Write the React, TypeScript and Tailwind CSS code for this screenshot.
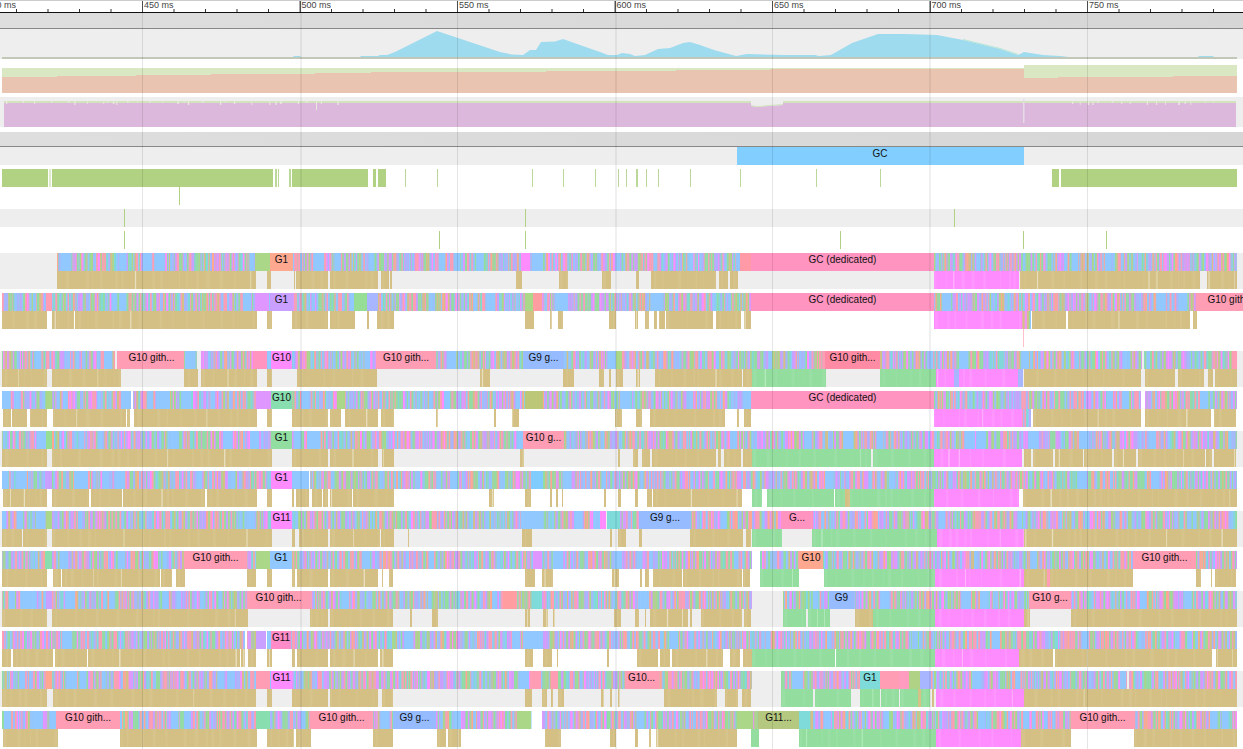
import React from "react";

// one slice of a track: [from, to, kind, label]
// kind m = mixed goroutines, t = tan syscalls, g = green, p = magenta, or a plain colour
type Seg = [number, number, string, string?];

type Proc = {
  top: Seg[];
  bot: Seg[];
  gray: boolean;
  mark?: number;
};

const WIDTH = 1243;
const PINK = "#ff9db4";
const GC = "#ff94c0";
const BLUE = "#90c8ff";
const MAG = "#ff8cff";
const LIME = "#aad888";
const MINT = "#88deae";
const SALMON = "#ffa890";
const PURPLE = "#c9a0ff";
const ORCHID = "#e096ff";
const PERI = "#a8b6ff";
const CYAN = "#7fdada";
const G9 = "#96bcff";

const procs: Proc[] = [
  {
    gray: true,
    top: [[57, 255, "m"], [255, 270, LIME], [270, 293, SALMON, "G1"], [293, 521, "m"], [521, 530, MAG], [530, 532, "m"], [532, 543, BLUE], [543, 740, "m"], [740, 751, "#ff9aa6"], [751, 934, GC, "GC (dedicated)"], [934, 1237, "m"]],
    bot: [[57, 256, "t"], [267, 271, "t"], [294, 295, "t"], [296, 328, "t"], [330, 378, "t"], [381, 389, "t"], [390, 392, "t"], [516, 522, "t"], [559, 568, "t"], [602, 611, "t"], [636, 639, "t"], [651, 716, "t"], [719, 728, "t"], [730, 738, "t"], [934, 1019, "p"], [1020, 1200, "t"], [1207, 1237, "t"]],
  },
  {
    gray: false,
    mark: 1023,
    top: [[2, 46, "m"], [46, 52, PINK], [52, 255, "m"], [255, 269, ORCHID], [269, 270, BLUE], [270, 293, PURPLE, "G1"], [293, 354, "m"], [354, 367, "#96de96"], [367, 378, PERI], [378, 525, "m"], [525, 533, LIME], [533, 542, "#ff9da0"], [542, 558, "m"], [558, 568, BLUE], [568, 751, "m"], [751, 934, GC, "GC (dedicated)"], [934, 1196, "m"], [1196, 1265, PINK, "G10 gith..."]],
    bot: [[2, 47, "t"], [52, 57, "t"], [57, 74, "t"], [75, 257, "t"], [267, 272, "t"], [292, 328, "t"], [330, 355, "t"], [367, 369, "t"], [377, 394, "t"], [525, 534, "t"], [550, 551.5, "t"], [558, 563, "t"], [609, 616, "t"], [635, 638, "t"], [645, 649, "t"], [654, 657, "t"], [659, 665, "t"], [666, 713, "t"], [716, 741, "t"], [744, 751, "t"], [934, 1022, "p"], [1022, 1031, "m"], [1032, 1066, "t"], [1068, 1190, "t"], [1193, 1197, "t"]],
  },
  {
    gray: true,
    top: [[2, 115, "m"], [117, 119, PINK], [119, 184, PINK, "G10 gith..."], [184, 197, "m"], [201, 253, "m"], [253, 267, "#ff94c0"], [267, 271, BLUE], [271, 292, MAG, "G10"], [292, 376, "m"], [376, 436, PINK, "G10 gith..."], [436, 523, "m"], [523, 564, G9, "G9 g..."], [564, 616, "m"], [616, 622, LIME], [622, 825, "m"], [825, 880, "#ff8ca4", "G10 gith..."], [880, 1142, "m"], [1144, 1232, "m"], [1232, 1237, PINK]],
    bot: [[2, 47, "t"], [52, 118, "t"], [118, 121, "t"], [184, 198, "t"], [201, 257, "t"], [267, 272, "t"], [297, 377, "t"], [480, 490, "t"], [563, 574, "t"], [599, 604, "t"], [609, 611, "t"], [616, 623, "t"], [636, 640, "t"], [655, 695, "t"], [695, 718, "t"], [718, 728, "t"], [728, 742, "t"], [743, 752, "t"], [752, 826, "g"], [880, 936, "g"], [936, 954, "p"], [954, 959, PERI], [959, 1018, "p"], [1018, 1023, PERI], [1024, 1141, "t"], [1145, 1175, "t"], [1178, 1204, "t"], [1208, 1213, "t"], [1215, 1237, "t"]],
  },
  {
    gray: false,
    top: [[2, 46, "m"], [46, 52, LIME], [52, 131, "m"], [133, 156, "m"], [156, 170, BLUE], [170, 256, "m"], [256, 271, ORCHID], [271, 292, MINT, "G10"], [292, 337, "m"], [337, 345, LIME], [345, 525, "m"], [525, 543, "#bcc878"], [543, 751, "m"], [751, 934, GC, "GC (dedicated)"], [934, 1141, "m"], [1145, 1237, "m"]],
    bot: [[3, 11, "t"], [12, 27, "t"], [30, 47, "t"], [53, 126, "t"], [127, 130, "t"], [134, 257, "t"], [267, 272, "t"], [292, 328, "t"], [330, 341, "t"], [345, 378, "t"], [381, 394, "t"], [436, 437.5, "t"], [494, 496, "t"], [512, 519, "t"], [615, 622, "t"], [636, 642, "t"], [650, 725, "t"], [737, 739, "t"], [744, 751, "t"], [934, 1022, "p"], [1022, 1031, "m"], [1033, 1141, "t"], [1145, 1211, "t"], [1214, 1236, "t"]],
  },
  {
    gray: true,
    top: [[2, 46, "m"], [46, 52, "#96de96"], [52, 271, "m"], [271, 292, "#92dea0", "G1"], [292, 307, "m"], [307, 319, BLUE], [319, 523, "m"], [523, 564, PINK, "G10 g..."], [564, 1237, "m"]],
    bot: [[2, 47, "t"], [52, 272, "t"], [292, 328, "t"], [330, 378, "t"], [382, 394, "t"], [520, 524, "t"], [618, 620, "t"], [633, 638, "t"], [642, 650, "t"], [652, 716, "t"], [718, 721, "t"], [724, 741, "t"], [743, 752, "t"], [752, 871, "g"], [873, 934, "g"], [934, 1022, "p"], [1024, 1031, "t"], [1033, 1053, "t"], [1055, 1083, "t"], [1084, 1112, "t"], [1114, 1136, "t"], [1138, 1205, "t"], [1206, 1212, "t"], [1214, 1236, "t"]],
  },
  {
    gray: false,
    top: [[2, 45, "m"], [45, 52, PURPLE], [52, 74, "m"], [74, 88, BLUE], [88, 271, "m"], [271, 292, MAG, "G1"], [292, 309, BLUE], [310, 531, "m"], [531, 543, "#80ccff"], [543, 1237, "m"]],
    bot: [[3, 47, "t"], [52, 89, "t"], [91, 122, "t"], [123, 205, "t"], [207, 257, "t"], [267, 272, "t"], [292, 294, "t"], [296, 309, "t"], [312, 322, "t"], [323, 328, "t"], [330, 352, "t"], [353, 394, "t"], [489, 494, "t"], [525, 531, "t"], [550, 552, "t"], [556, 558, "t"], [562, 563, "t"], [604, 606, "t"], [618, 621, "t"], [635, 638, "t"], [647, 652, "t"], [653, 742, "t"], [752, 762, "g"], [767, 834, "g"], [835, 845, "g"], [845, 850, "t"], [850, 934, "g"], [934, 1019, "p"], [1023, 1237, "t"]],
  },
  {
    gray: true,
    top: [[2, 46, "m"], [46, 52, LIME], [52, 271, "m"], [271, 292, MAG, "G11"], [292, 521, "m"], [521, 543, BLUE], [543, 600, "m"], [600, 606, MAG], [607, 620, CYAN], [620, 639, "m"], [639, 691, G9, "G9 g..."], [691, 781, "m"], [781, 813, GC, "G..."], [813, 1237, "m"]],
    bot: [[2, 22, "t"], [23, 47, "t"], [52, 272, "t"], [292, 295, "t"], [299, 328, "t"], [330, 380, "t"], [381, 394, "t"], [408, 409, "t"], [522, 532, "t"], [610, 612, "t"], [618, 626, "t"], [639, 642, "t"], [690, 743, "t"], [746, 751, "t"], [752, 782, "g"], [812, 937, "g"], [937, 1024, "p"], [1024, 1237, "t"]],
  },
  {
    gray: false,
    top: [[2, 45, "m"], [45, 52, MINT], [52, 184, "m"], [184, 247, PINK, "G10 gith..."], [247, 256, "m"], [256, 270, LIME], [270, 292, BLUE, "G1"], [292, 533, "m"], [533, 542, ORCHID], [542, 752, "m"], [760, 799, "m"], [799, 823, SALMON, "G10"], [823, 1133, "m"], [1133, 1196, PINK, "G10 gith..."], [1196, 1237, "m"]],
    bot: [[2, 47, "t"], [53, 61, "t"], [62, 160, "t"], [161, 172, "t"], [176, 185, "t"], [247, 256, "t"], [267, 272, "t"], [292, 295, "t"], [297, 328, "t"], [330, 378, "t"], [382, 383, "t"], [389, 393, "t"], [525, 535, "t"], [542, 553, "t"], [612, 619, "t"], [640, 642, "t"], [645, 649, "t"], [653, 682, "t"], [683, 742, "t"], [743, 750, "t"], [760, 799, "g"], [824, 935, "g"], [935, 1024, "p"], [1024, 1047, "t"], [1047, 1050, PINK], [1050, 1133, "t"], [1196, 1201, "t"], [1211, 1212, "t"], [1215, 1236, "t"]],
  },
  {
    gray: true,
    top: [[2, 46, "m"], [46, 52, PURPLE], [52, 247, "m"], [247, 310, PINK, "G10 gith..."], [310, 503, "m"], [503, 516, "#ff9da0"], [516, 532, "m"], [532, 542, CYAN], [542, 752, "m"], [783, 829, "m"], [829, 854, G9, "G9"], [854, 1029, "m"], [1029, 1071, PINK, "G10 g..."], [1071, 1237, "m"]],
    bot: [[2, 47, "t"], [52, 248, "t"], [310, 328, "t"], [330, 393, "t"], [410, 412, "t"], [432, 438, "t"], [525, 530, "t"], [543, 548, "t"], [553, 555, "t"], [614, 621, "t"], [635, 639, "t"], [645, 646, "t"], [650, 688, "t"], [690, 692, "t"], [701, 742, "t"], [744, 751, "t"], [783, 806, "g"], [808, 830, "g"], [855, 873, "t"], [873, 935, "g"], [935, 1024, "p"], [1024, 1030, "t"], [1071, 1237, "t"]],
  },
  {
    gray: false,
    top: [[2, 245, "m"], [247, 256, "m"], [256, 266, PURPLE], [267, 271, BLUE], [271, 291, "#ff8cc8", "G11"], [291, 527, "m"], [527, 543, BLUE], [543, 1237, "m"]],
    bot: [[2, 11, "t"], [13, 53, "t"], [55, 87, "t"], [88, 240, "t"], [241, 245, "t"], [248, 256, "t"], [267, 272, "t"], [292, 295, "t"], [297, 328, "t"], [330, 378, "t"], [380, 393, "t"], [525, 533, "t"], [543, 552, "t"], [557, 558, "t"], [607, 609, "t"], [637, 658, "t"], [660, 670, "t"], [672, 723, "t"], [730, 740, "t"], [743, 752, "t"], [752, 835, "g"], [836, 935, "g"], [935, 1019, "p"], [1019, 1053, "t"], [1055, 1212, "t"], [1216, 1237, "t"]],
  },
  {
    gray: true,
    top: [[2, 46, "m"], [46, 52, SALMON], [52, 256, "m"], [256, 270, PINK], [270, 271, BLUE], [271, 292, MAG, "G11"], [292, 530, "m"], [530, 541, PINK], [541, 551, "m"], [551, 558, PINK], [558, 625, "m"], [625, 658, PINK, "G10..."], [658, 752, "m"], [781, 860, "m"], [860, 880, CYAN, "G1"], [880, 899, PINK], [899, 909, "#ff9cc0"], [909, 920, "#b0d284"], [920, 931, PERI], [931, 1127, "m"], [1129, 1237, "m"]],
    bot: [[2, 47, "t"], [53, 256, "t"], [267, 272, "t"], [292, 328, "t"], [330, 378, "t"], [382, 393, "t"], [525, 532, "t"], [542, 547, "t"], [551, 553, "t"], [558, 564, "t"], [601, 604, "t"], [610, 612, "t"], [618, 619.5, "t"], [664, 717, "t"], [725, 738, "t"], [742, 751, "t"], [781, 813, "g"], [815, 851, "g"], [860, 880, "g"], [881, 899, "g"], [900, 918, "g"], [918, 921, "t"], [921, 930, "g"], [932, 934, "t"], [936, 1024, "p"], [1024, 1237, "t"]],
  },
  {
    gray: false,
    top: [[2, 56, "m"], [56, 120, PINK, "G10 gith..."], [120, 256, "m"], [256, 270, MINT], [270, 310, "m"], [310, 373, PINK, "G10 gith..."], [373, 393, "m"], [393, 436, G9, "G9 g..."], [436, 517, "m"], [517, 531, LIME], [531, 532, "#c8e6ff"], [542, 737, "m"], [737, 753, LIME], [753, 758, "m"], [758, 799, "#b5c880", "G11..."], [799, 810, CYAN], [810, 1071, "m"], [1071, 1134, PINK, "G10 gith..."], [1134, 1237, "m"]],
    bot: [[3, 58, "t"], [120, 257, "t"], [267, 294, "t"], [296, 311, "t"], [373, 393, "t"], [437, 446, "t"], [448, 461, "t"], [545, 561, "t"], [610, 616, "t"], [635, 638, "t"], [649, 651, "t"], [656, 737, "t"], [751, 759, "g"], [799, 825, "g"], [825, 936, "g"], [936, 1021, "p"], [1021, 1071, "t"], [1134, 1237, "t"]],
  },
];

const gcBars: Seg[] = [[2, 48, "l"], [49.5, 50.5, "l"], [52, 273, "l"], [275, 277, "l"], [278, 279, "l"], [289, 291, "l"], [292, 295, "l"], [295, 368, "l"], [373, 376, "l"], [378, 386, "l"], [405, 406, "l"], [437, 438, "l"], [532, 533, "l"], [563, 564, "l"], [595, 596, "l"], [618, 619, "l"], [626, 627, "l"], [636, 638, "l"], [646, 647, "l"], [658, 659, "l"], [690, 691, "l"], [740, 741, "l"], [816, 817, "l"], [880, 881, "l"], [1052, 1059, "l"], [1061, 1237, "l"]];

const areaPoints = [
  [2, 57], [293, 57], [294, 56], [300, 56], [301, 57], [360, 57], [361, 56], [378, 56], [380, 55], [387, 55], [395, 52], [437, 31], [470, 42], [500, 52], [512, 54.5], [523, 55], [530, 50], [536, 50], [541, 42], [555, 41.5], [563, 39], [580, 45], [600, 52], [608, 55], [617, 55], [622, 53], [630, 54], [635, 56], [645, 55], [658, 49], [670, 48], [683, 43], [690, 42], [700, 45], [714, 50], [736, 56], [747, 54], [783, 55], [815, 55], [819, 56], [831, 55], [852, 43], [878, 34], [904, 34], [937, 35], [963, 40], [1000, 49], [1018, 55], [1024, 52], [1043, 55], [1060, 56], [1069, 57], [1198, 57], [1199, 56], [1213, 56], [1214, 57], [1237, 57],
];

// small seeded generator so every render draws the same stripes
function makeRand(seed: number) {
  let a = seed;
  return () => {
    a = (a + 0x6d2b79f5) | 0;
    let t = Math.imul(a ^ (a >>> 15), 1 | a);
    t = (t + Math.imul(t ^ (t >>> 7), 61 | t)) ^ t;
    return ((t ^ (t >>> 14)) >>> 0) / 4294967296;
  };
}

const mixColors = [BLUE, BLUE, BLUE, PINK, PINK, PINK, ORCHID, ORCHID, PURPLE, MAG, "#92dea0", "#92dea0", "#92dea0", LIME, SALMON, CYAN, PERI, PERI, "#d4c084"];

function Stripes({ seg, y, h, rand }: { seg: Seg; y: number; h: number; rand: () => number }) {
  const [from, to, kind] = seg;
  const rects: React.ReactElement[] = [];
  const add = (x: number, w: number, fill: string) =>
    rects.push(<rect key={rects.length} x={x} y={y} width={w} height={h} fill={fill} />);

  if (kind === "m") {
    add(from, to - from, "#a9bcdc");
    let x = from;
    while (x < to) {
      const wide = rand() < (x < 300 ? 0.04 : 0.012);
      const w = wide ? 3 + rand() * 8 : 0.5 + rand() * 1.6;
      const fill = wide ? BLUE : mixColors[Math.floor(rand() * mixColors.length)];
      add(x, Math.min(w, to - x), fill);
      x += w;
    }
  } else if (kind === "t" || kind === "g" || kind === "p") {
    const base = kind === "t" ? "#d4c084" : kind === "g" ? "#93dd9e" : MAG;
    const soft = kind === "t" ? "#d7c48c" : kind === "g" ? "#9ae0a6" : "#ff96ff";
    const pale = kind === "t" ? "#e8dfbf" : kind === "g" ? "#b8ecc0" : "#ffb4ff";
    add(from, to - from, base);
    let x = from + rand() * 4;
    while (x < to) {
      const pick = rand();
      const w = pick < 0.12 ? 0.5 + rand() : 0.5 + rand() * 3;
      add(x, Math.min(w, Math.max(to - x, 0)), pick < 0.12 ? pale : soft);
      x += w + 3 + rand() * 16;
    }
  } else if (kind === "l") {
    add(from, to - from, to - from > 2 ? "#b0d282" : "#bcd898");
  } else {
    add(from, to - from, kind);
  }
  return <>{rects}</>;
}

function Label({ seg, y }: { seg: Seg; y: number }) {
  if (!seg[3]) return null;
  return (
    <text x={(seg[0] + seg[1]) / 2} y={y + 10} textAnchor="middle" fontSize={10} fill="#111">
      {seg[3]}
    </text>
  );
}

function ProcRow({ proc, seed }: { proc: Proc; seed: number }) {
  const rand = makeRand(seed * 7919 + 13);
  return (
    <div className={proc.mark ? "h-[54px] mb-[4px]" : "h-[36px] mb-[4px]"}>
      <div className={proc.gray ? "h-[36px] bg-[#eeeeee]" : "h-[36px]"}>
        <svg width={WIDTH} height={proc.mark ? 54 : 36} className="block">
          {proc.top.map((s, i) => <Stripes key={i} seg={s} y={0} h={18} rand={rand} />)}
          {proc.bot.map((s, i) => <Stripes key={i} seg={s} y={18} h={18} rand={rand} />)}
          {proc.top.map((s, i) => <Label key={i} seg={s} y={0} />)}
          {proc.mark && <rect x={proc.mark} y={36} width={1} height={18} fill="#ffc0cc" />}
        </svg>
      </div>
    </div>
  );
}

function Ruler() {
  const ticks: React.ReactElement[] = [];
  for (let i = 0; i < 40; i++) {
    const x = -15.5 + i * 31.5;
    const major = i % 5 === 0;
    if (x > WIDTH) break;
    ticks.push(
      <rect
        key={i}
        x={x}
        y={major ? 1 : 9}
        width={major && i % 10 === 5 ? 1 : major ? 1.5 : 1}
        height={major ? 11 : 3}
        fill={major ? "#555" : "#333"}
      />
    );
    if (major) {
      ticks.push(
        <text key={"t" + i} x={x + 2} y={8} fontSize={9} fill="#444">
          {400 + i * 10} ms
        </text>
      );
    }
  }
  return (
    <svg width={WIDTH} height={13} className="block">
      <rect x={0} y={0} width={WIDTH} height={1} fill="#cccccc" />
      {ticks}
      <rect x={0} y={12} width={WIDTH} height={1} fill="#111" />
    </svg>
  );
}

function SectionHead({ tall }: { tall?: boolean }) {
  return (
    <div
      className={
        tall
          ? "h-[16px] border-b border-[#888888] bg-gradient-to-r from-[#dedede] to-[#d6d6d6]"
          : "h-[15px] border-b border-[#888888] bg-gradient-to-r from-[#dedede] to-[#d6d6d6]"
      }
    />
  );
}

function CpuArea() {
  const pts = areaPoints.map((p) => p.join(",")).join(" ");
  return (
    <svg width={WIDTH} height={30} viewBox="0 29 1243 30" className="block bg-[#eeeeee]">
      <polygon points={pts + " 1237,58 2,58"} fill="#9fdbee" />
      <polyline points="963,39.5 1000,48.5 1018,54.5" fill="none" stroke="#b4e6d6" strokeWidth={1} />
      <rect x={2} y={57} width={1235} height={2} fill="#c2c8b8" />
    </svg>
  );
}

function HeapArea() {
  const steps = "2,77 57,77 57,76 136,76 136,75 211,75 211,74 315,74 315,73 371,73 371,72 546,72 546,71 676,71 676,70 770,70 770,69 1024,69 1024,78 1058,78 1058,77 1173,77 1173,76 1237,76 1237,93 2,93";
  return (
    <svg width={WIDTH} height={38} viewBox="0 59 1243 38" className="block">
      <polygon points="2,68 1024,68 1024,65 1237,65 1237,93 2,93" fill="#d9e8c2" />
      <polygon points={steps} fill="#e9c4b1" />
    </svg>
  );
}

function ThreadArea() {
  const rand = makeRand(42);
  const notches: React.ReactElement[] = [];
  const addRun = (from: number, to: number) => {
    let x = from;
    while (x < to) {
      notches.push(<rect key={notches.length} x={x} y={101} width={0.8 + rand()} height={2 + Math.floor(rand() * 3)} fill="#e8e8dc" />);
      x += 3 + rand() * 16;
    }
  };
  addRun(6, 340);
  addRun(1072, 1225);
  return (
    <svg width={WIDTH} height={30} viewBox="0 97 1243 30" className="block bg-[#eeeeee]">
      <rect x={4} y={101} width={1232} height={2} fill="#d3e3bd" />
      <rect x={4} y={103} width={1232} height={24} fill="#dcb9dc" />
      <polygon points="751,101 751,106 757,107 783,105 783,101" fill="#eeeeee" />
      <polygon points="751,105 757,106 783,104 783,105 757,107 751,106" fill="#d3e3bd" />
      <rect x={1023} y={99} width={1.5} height={24} fill="#e6dce6" />
      <rect x={316} y={101} width={1} height={9} fill="#e8e8dc" />
      {notches}
    </svg>
  );
}

function Bars({ bars, gray, seed, w = 1 }: { bars: number[] | Seg[]; gray?: boolean; seed: number; w?: number }) {
  const rand = makeRand(seed);
  return (
    <svg width={WIDTH} height={18} className={gray ? "block bg-[#eeeeee]" : "block"}>
      {(bars as (number | Seg)[]).map((b, i) =>
        typeof b === "number" ? (
          <rect key={i} x={b} y={0} width={w} height={18} fill="#b0d282" />
        ) : (
          <Stripes key={i} seg={b} y={0} h={18} rand={rand} />
        )
      )}
    </svg>
  );
}

const gridLines = [142, 300, 457, 615, 772, 929, 1087];

export default function App() {
  return (
    <div className="relative w-[1243px] h-[749px] overflow-hidden bg-white font-['Liberation_Sans',Arial,sans-serif]">
      <Ruler />
      <SectionHead tall />
      <CpuArea />
      <HeapArea />
      <ThreadArea />
      <div className="h-[5px]" />
      <SectionHead />
      <div className="relative h-[18px] bg-[#eeeeee]">
        <svg width={WIDTH} height={18} className="block">
          <rect x={737} y={0} width={287} height={18} fill="#82cfff" />
          <text x={880} y={10} textAnchor="middle" fontSize={10} fill="#111">
            GC
          </text>
        </svg>
      </div>
      <div className="flex flex-col pt-[4px] pb-[4px]">
        <Bars bars={gcBars} seed={3} />
        <Bars bars={[179]} seed={4} />
        <div className="h-[4px]" />
        <Bars bars={[124, 525, 954]} gray seed={5} />
        <div className="h-[4px]" />
        <Bars bars={[124, 439, 525, 840, 1023, 1106]} seed={6} />
      </div>
      {procs.map((p, i) => (
        <ProcRow key={i} proc={p} seed={i + 1} />
      ))}
      <div className="absolute inset-x-0 top-0 bottom-0 pointer-events-none">
        {gridLines.map((x, i) => (
          <div
            key={x}
            className={i % 2 === 0 ? "absolute top-[1px] bottom-0 w-[1px] bg-black/10" : "absolute top-[1px] bottom-0 w-[2px] bg-black/[0.06]"}
            style={{ left: x }}
          />
        ))}
      </div>
    </div>
  );
}
